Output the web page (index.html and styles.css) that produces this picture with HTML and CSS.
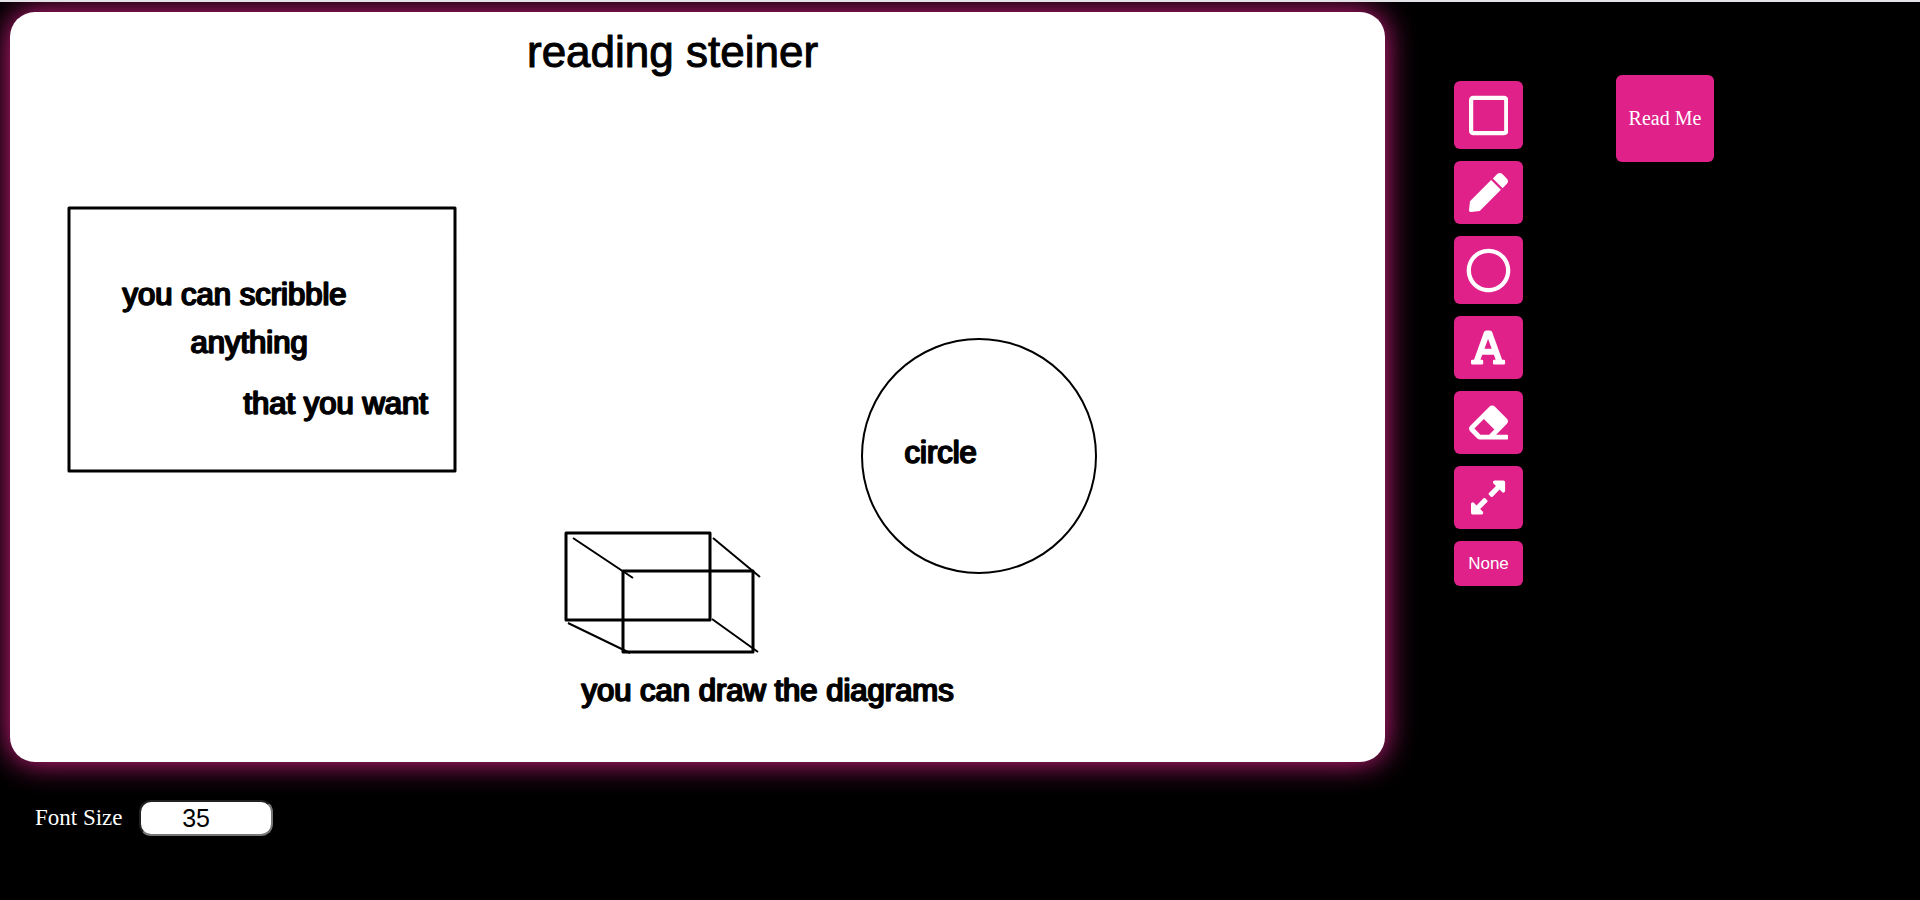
FILE: index.html
```html
<!DOCTYPE html>
<html lang="en">
<head>
<meta charset="utf-8">
<title>Whiteboard</title>
<link rel="stylesheet" href="styles.css">
</head>
<body>
<main class="workspace">
  <svg class="board" viewBox="10 12 1375 750" role="img" aria-label="Drawing board">
    <g class="shape">
      <g class="shape-box">
        <rect x="69" y="208" width="386" height="263"/>
        <rect x="566" y="533" width="144" height="87"/>
        <rect x="623" y="571" width="130" height="81"/>
      </g>
      <path d="M573 538L633 578M713 538L760 577M568 623L630 653M712 619L758 652"/>
      <circle cx="979" cy="456" r="117"/>
    </g>
    <text class="note note-title" x="527" y="67">reading steiner</text>
    <text class="note" x="122" y="305">you can scribble</text>
    <text class="note" x="190" y="353">anything</text>
    <text class="note" x="243" y="414">that you want</text>
    <text class="note" x="904" y="463">circle</text>
    <text class="note" x="581" y="701">you can draw the diagrams</text>
  </svg>

  <div class="tools" role="toolbar" aria-label="Drawing tools">
    <button class="btn tool tool-large" type="button" aria-label="Rectangle">
      <svg class="icon icon-large" viewBox="0 0 448 512"><path d="M400 32H48C21.500 32 0 53.500 0 80v352c0 26.500 21.500 48 48 48h352c26.500 0 48-21.500 48-48V80c0-26.500-21.500-48-48-48zm-6 400H54c-3.300 0-6-2.700-6-6V86c0-3.300 2.700-6 6-6h340c3.300 0 6 2.700 6 6v340c0 3.300-2.700 6-6 6z"/></svg>
    </button>
    <button class="btn tool" type="button" aria-label="Pen">
      <svg class="icon" viewBox="0 0 512 512"><path d="M290.740 93.240l128.020 128.020-277.990 277.990-114.140 12.600C11.350 513.540-1.560 500.620.140 485.340l12.700-114.220 277.900-277.880zm207.200-19.060l-60.110-60.110c-18.750-18.750-49.160-18.750-67.910 0l-56.550 56.550 128.020 128.020 56.550-56.550c18.750-18.760 18.750-49.160 0-67.910z"/></svg>
    </button>
    <button class="btn tool tool-large" type="button" aria-label="Circle">
      <svg class="icon icon-large" viewBox="0 0 512 512"><path d="M256 8C119 8 8 119 8 256s111 248 248 248 248-111 248-248S393 8 256 8zm0 448c-110.500 0-200-89.500-200-200S145.500 56 256 56s200 89.500 200 200-89.500 200-200 200z"/></svg>
    </button>
    <button class="btn tool" type="button" aria-label="Text">
      <svg class="icon" viewBox="0 0 448 512"><path d="M432 416h-23.410L277.530 53.690A32 32 0 0 0 247.580 32h-47.160a32 32 0 0 0-29.950 21.690L39.410 416H16a16 16 0 0 0-16 16v32a16 16 0 0 0 16 16h128a16 16 0 0 0 16-16v-32a16 16 0 0 0-16-16h-19.580l23.300-64h152.560l23.300 64H304a16 16 0 0 0-16 16v32a16 16 0 0 0 16 16h128a16 16 0 0 0 16-16v-32a16 16 0 0 0-16-16zM176.850 272L224 142.510 271.150 272z"/></svg>
    </button>
    <button class="btn tool" type="button" aria-label="Eraser">
      <svg class="icon" viewBox="0 0 512 512"><path d="M497.941 273.941c18.745-18.745 18.745-49.137 0-67.882l-160-160c-18.745-18.745-49.136-18.746-67.883 0l-256 256c-18.745 18.745-18.745 49.137 0 67.882l96 96A48.004 48.004 0 0 0 144 480h356c6.627 0 12-5.373 12-12v-40c0-6.627-5.373-12-12-12H355.883l142.058-142.059zm-302.627-62.627l137.373 137.373L265.373 416H150.628l-80-80 124.686-124.686z"/></svg>
    </button>
    <button class="btn tool" type="button" aria-label="Line">
      <svg class="icon" viewBox="0 0 448 512"><path d="M212.686 315.314L120 408l32.922 31.029c15.120 15.120 4.412 40.971-16.970 40.971h-112C10.697 480 0 469.255 0 456V344c0-21.382 25.803-32.090 40.922-16.971L72 360l92.686-92.686c6.248-6.248 16.379-6.248 22.627 0l25.373 25.373c6.249 6.248 6.249 16.378 0 22.627zm22.628-118.628L328 104l-32.922-31.029C279.958 57.851 290.666 32 312.048 32h112C437.303 32 448 42.745 448 56v112c0 21.382-25.803 32.090-40.922 16.971L376 152l-92.686 92.686c-6.248 6.248-16.379 6.248-22.627 0l-25.373-25.373c-6.249-6.248-6.249-16.378 0-22.627z"/></svg>
    </button>
    <button class="btn tool tool-none" type="button">None</button>
  </div>

  <button class="btn readme" type="button">Read Me</button>
</main>

<div class="settings">
  <label class="settings-label" for="font-size">Font Size</label>
  <input class="settings-input" id="font-size" type="number" value="35">
</div>
</body>
</html>
```
FILE: styles.css
```css
* {
  box-sizing: border-box;
}

html {
  min-height: 100%;
  background: #000;
}

body {
  margin: 0;
  border-top: 2px solid #e4e4e8;
  color: #fff;
  font-family: "Liberation Serif", "Times New Roman", serif;
}

.workspace {
  display: grid;
  grid-template-columns: minmax(0, 1fr) 231px 98px;
  align-items: start;
  padding: 10px 206px 0 10px;
}

.board {
  display: block;
  width: 100%;
  height: auto;
  border-radius: 25px;
  background: #fff;
  box-shadow: 0 0 30px #e0218a;
}

.shape {
  fill: none;
  stroke: #000;
  stroke-width: 2px;
  stroke-linejoin: round;
}

.shape-box {
  stroke-width: 3px;
}

.note {
  fill: #000;
  stroke: #000;
  stroke-width: 1px;
  stroke-linejoin: round;
  font-family: "Liberation Sans", Arial, sans-serif;
  font-size: 31px;
  paint-order: stroke;
  text-shadow: 1px 0 0 #000;
}

.note-title {
  font-size: 44px;
  text-shadow: none;
}

.tools {
  display: flex;
  flex-direction: column;
  gap: 12px;
  padding: 69px 93px 0 69px;
}

.btn {
  display: flex;
  align-items: center;
  justify-content: center;
  padding: 0;
  border: 0;
  border-radius: 6px;
  background: #e0218a;
  color: #fff;
  cursor: pointer;
}

.tool {
  height: 63px;
}

.tool-large {
  height: 68px;
}

.tool-none {
  height: 45px;
  font-family: "Liberation Sans", Arial, sans-serif;
  font-size: 17px;
}

.icon {
  display: block;
  height: 39px;
  fill: #fff;
}

.icon-large {
  height: 45px;
}

.readme {
  width: 98px;
  height: 87px;
  margin-top: 63px;
  font-family: inherit;
  font-size: 20px;
}

.settings {
  display: flex;
  align-items: center;
  gap: 16px;
  padding: 38px 35px;
}

.settings-label {
  font-size: 23px;
}

.settings-input {
  width: 134px;
  height: 36px;
  padding: 0 4px 0 0;
  border: 2px inset #767676;
  border-radius: 12px;
  background: #fff;
  color: #000;
  font-family: "Liberation Sans", Arial, sans-serif;
  font-size: 25px;
  text-align: center;
}
```
